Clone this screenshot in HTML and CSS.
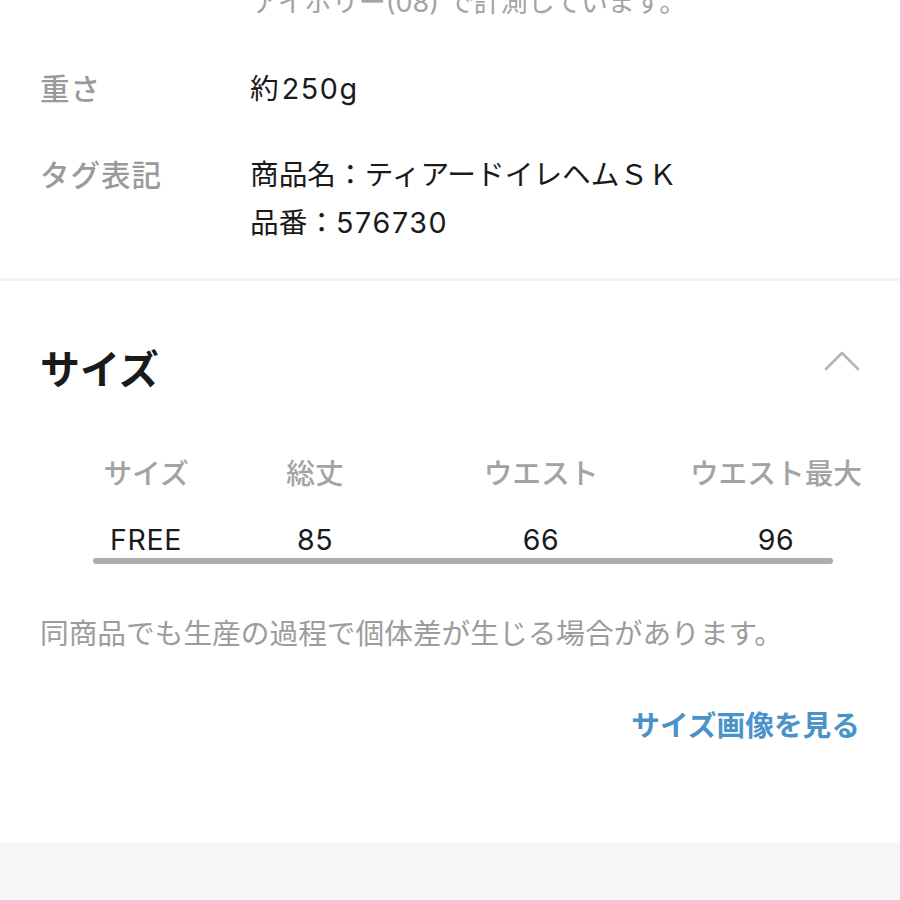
FILE: index.html
```html
<!DOCTYPE html>
<html lang="ja">
<head>
<meta charset="utf-8">
<link rel="stylesheet" href="styles.css">
</head>
<body>
<div class="page">
  <section class="spec">
    <div class="spec-row">
      <div class="spec-label"></div>
      <div class="spec-value muted">アイボリー(08) で計測しています。</div>
    </div>
    <div class="spec-row">
      <div class="spec-label">重さ</div>
      <div class="spec-value">約<span class="num gap">250g</span></div>
    </div>
    <div class="spec-row">
      <div class="spec-label">タグ表記</div>
      <div class="spec-value">商品名：ティアードイレヘムＳＫ<br>品番：<span class="num">576730</span></div>
    </div>
  </section>

  <section class="size">
    <div class="size-head">
      <h2 class="size-title">サイズ</h2>
      <svg class="chevron" width="36" height="22" viewBox="0 0 36 22" aria-hidden="true">
        <polyline points="2,19 18,3 34,19" fill="none" stroke="#b4b4b4" stroke-width="2.6" stroke-linecap="round" stroke-linejoin="round"/>
      </svg>
    </div>

    <div class="table-wrap">
      <div class="size-table">
        <div class="th">サイズ</div>
        <div class="th">総丈</div>
        <div class="th">ウエスト</div>
        <div class="th">ウエスト最大</div>
        <div class="td">FREE</div>
        <div class="td">85</div>
        <div class="td">66</div>
        <div class="td">96</div>
      </div>
      <div class="scrollbar"></div>
    </div>

    <p class="note">同商品でも生産の過程で個体差が生じる場合があります。</p>

    <div class="link-row">
      <a class="size-link" href="#">サイズ画像を見る</a>
    </div>
  </section>

  <footer class="foot"></footer>
</div>
</body>
</html>
```

FILE: styles.css
```css
* { box-sizing: border-box; }

html, body {
  margin: 0;
  padding: 0;
  background: #ffffff;
  overflow: hidden;
}

body {
  width: 900px;
  height: 900px;
  font-family: "Inter", "Noto Sans CJK JP", sans-serif;
  font-size: 28.7px;
  color: #1a1a1a;
}

.page {
  display: flex;
  flex-direction: column;
  height: 900px;
}

.num {
  letter-spacing: 1.6px;
}

.num.gap {
  margin-left: 3px;
}

/* ---------- spec list ---------- */
.spec {
  margin-top: -21px;
  padding: 0 40px 31px 40px;
  border-bottom: 3px solid #f3f3f3;
  display: flex;
  flex-direction: column;
  gap: 38px;
}

.spec-row {
  display: grid;
  grid-template-columns: 210px 1fr;
  line-height: 48px;
}

.spec-label {
  color: #9a9a9a;
  font-weight: 500;
  font-size: 29.5px;
  letter-spacing: 1px;
}

.spec-value {
  color: #1a1a1a;
}

.spec-value.muted {
  color: #a3a3a3;
  font-size: 27px;
  padding-left: 2px;
}

/* ---------- size section ---------- */
.size {
  padding: 65px 0 0 0;
  flex: 1;
  display: flex;
  flex-direction: column;
}

.size-head {
  display: flex;
  justify-content: space-between;
  align-items: flex-start;
  padding: 0 40px 0 40px;
}

.size-title {
  margin: 0;
  font-size: 40px;
  line-height: 48px;
  font-weight: 700;
  color: #1a1a1a;
}

.chevron {
  display: block;
  margin-top: 4px;
}

.table-wrap {
  margin-top: 56px;
  padding-left: 93px;
}

.size-table {
  display: grid;
  grid-template-columns: 106px 232px 220px 250px;
  row-gap: 24px;
}

.th {
  text-align: center;
  color: #a3a3a3;
  font-weight: 500;
  line-height: 48px;
  white-space: nowrap;
}

.td {
  text-align: center;
  color: #1a1a1a;
  line-height: 36px;
  font-size: 28.5px;
  letter-spacing: 0.6px;
}

.scrollbar {
  width: 740px;
  height: 6px;
  border-radius: 3px;
  background: #adadad;
}

.note {
  margin: 46px 0 0 0;
  padding: 0 40px;
  color: #9c9c9c;
  line-height: 48px;
}

.link-row {
  margin-top: 44px;
  padding-right: 40px;
  display: flex;
  justify-content: flex-end;
}

.size-link {
  color: #4a93c9;
  font-weight: 700;
  text-decoration: none;
  line-height: 48px;
}

.foot {
  height: 58px;
  background: #f6f6f6;
}
```
